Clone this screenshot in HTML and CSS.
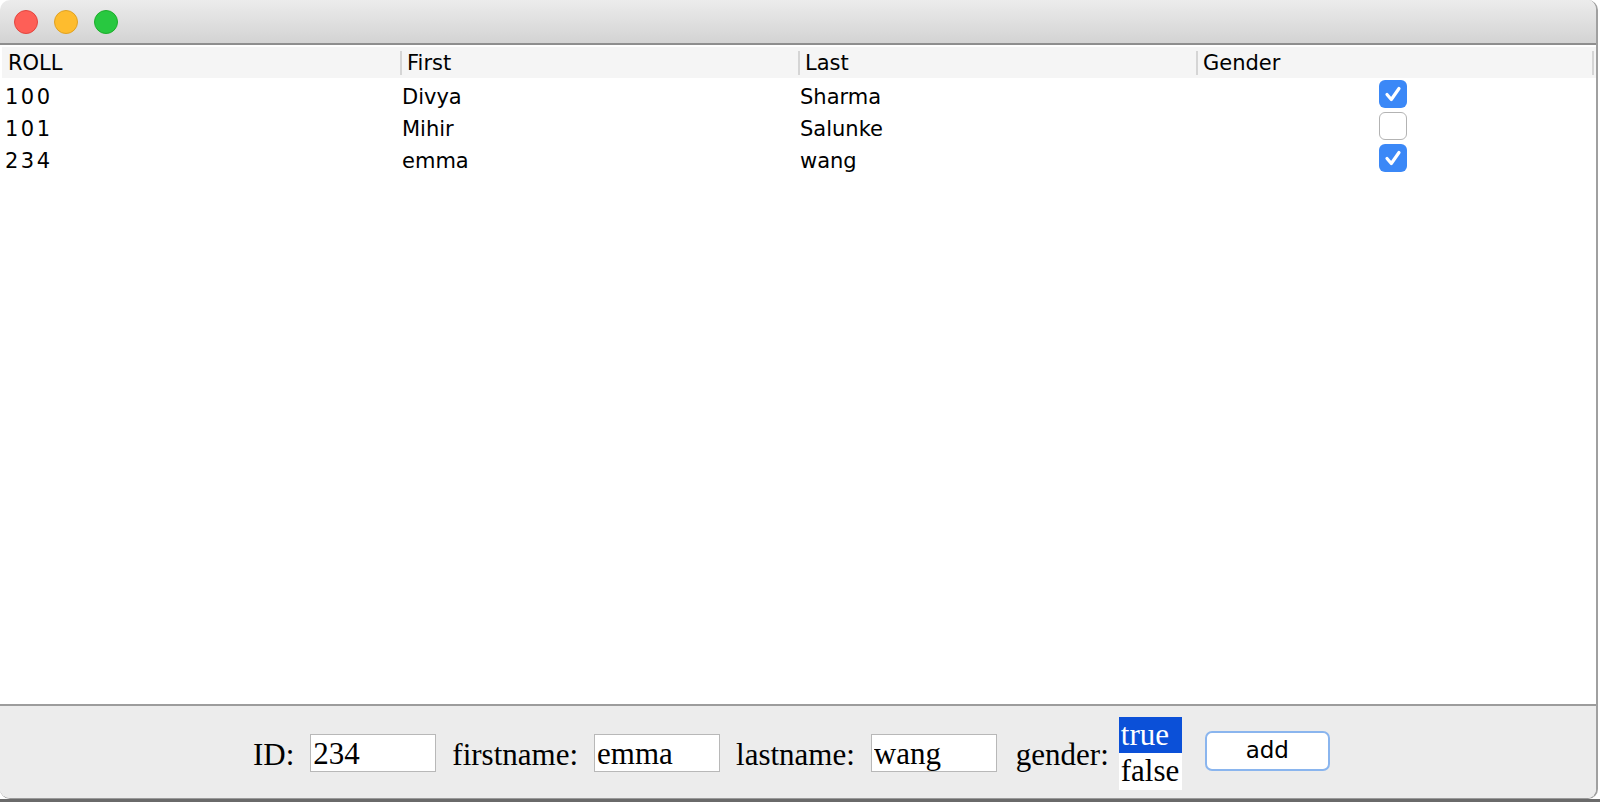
FILE: index.html
```html
<!DOCTYPE html>
<html>
<head>
<meta charset="utf-8">
<title>Students</title>
<link rel="stylesheet" href="styles.css">
</head>
<body>
<div class="window">
  <div class="titlebar">
    <span class="light red"></span>
    <span class="light yellow"></span>
    <span class="light green"></span>
  </div>
  <div class="tablearea">
    <div class="thead">
      <div class="hcell first">ROLL</div>
      <div class="hcell"><i class="sep"></i>First</div>
      <div class="hcell"><i class="sep"></i>Last</div>
      <div class="hcell"><i class="sep"></i>Gender<i class="sep end"></i></div>
    </div>
    <div class="row">
      <div class="cell num">100</div>
      <div class="cell">Divya</div>
      <div class="cell">Sharma</div>
      <div class="cell chk"><span class="box on"><svg viewBox="0 0 28 28" width="28" height="28"><path d="M8 14.5 L12.3 19.5 L20 8.5" fill="none" stroke="#fff" stroke-width="3.2" stroke-linecap="round" stroke-linejoin="round"/></svg></span></div>
    </div>
    <div class="row">
      <div class="cell num">101</div>
      <div class="cell">Mihir</div>
      <div class="cell">Salunke</div>
      <div class="cell chk"><span class="box off"></span></div>
    </div>
    <div class="row">
      <div class="cell num">234</div>
      <div class="cell">emma</div>
      <div class="cell">wang</div>
      <div class="cell chk"><span class="box on"><svg viewBox="0 0 28 28" width="28" height="28"><path d="M8 14.5 L12.3 19.5 L20 8.5" fill="none" stroke="#fff" stroke-width="3.2" stroke-linecap="round" stroke-linejoin="round"/></svg></span></div>
    </div>
  </div>
  <div class="panel">
    <span class="lbl">ID:</span>
    <input class="field" type="text" value="234">
    <span class="lbl">firstname:</span>
    <input class="field" type="text" value="emma">
    <span class="lbl">lastname:</span>
    <input class="field" type="text" value="wang">
    <span class="lbl gender">gender:</span>
    <div class="list">
      <div class="opt sel">true</div>
      <div class="opt">false</div>
    </div>
    <button class="btn" type="button">add</button>
  </div>
</div>
</body>
</html>
```

FILE: styles.css
```css
html, body {
  margin: 0;
  padding: 0;
}
html {
  background: linear-gradient(to bottom, #ffffff 0, #ffffff 799px, #6a6a6a 799px, #6a6a6a 100%);
}
body {
  width: 1600px;
  height: 802px;
  overflow: hidden;
}
.window {
  width: 1598px;
  height: 799px;
  box-sizing: border-box;
  border-right: 2px solid #a0a0a0;
  border-bottom: 1px solid #9a9a9a;
  border-radius: 10px;
  overflow: hidden;
  display: flex;
  flex-direction: column;
  background: #fff;
}
.titlebar {
  height: 43px;
  flex: 0 0 auto;
  border-bottom: 2px solid #8e8e8e;
  background: linear-gradient(to bottom, #ececec, #d3d3d3);
  display: flex;
  align-items: center;
  padding-left: 14px;
  gap: 16px;
}
.light {
  width: 24px;
  height: 24px;
  box-sizing: border-box;
  border-radius: 50%;
  margin-top: 1px;
}
.red { background: #fe5f57; border: 1px solid #e2463f; }
.yellow { background: #febc2e; border: 1px solid #dfa123; }
.green { background: #28c840; border: 1px solid #1dad2b; }

.tablearea {
  flex: 1 1 auto;
  background: #fff;
  padding: 2px 0 0 0;
  font-family: "DejaVu Sans", sans-serif;
  font-size: 21px;
  color: #000;
}
.thead {
  display: grid;
  grid-template-columns: repeat(4, 398px);
  height: 31px;
  margin-left: 2px;
  background: #f5f5f5;
}
.thead .hcell:first-child {
  margin-left: -2px;
}
.hcell {
  display: flex;
  align-items: center;
}
.hcell.first {
  padding-left: 8px;
}
.sep {
  width: 2px;
  height: 24px;
  background: #d5d5d5;
  margin-right: 5px;
  flex: 0 0 auto;
}
.sep.end {
  margin-left: auto;
  margin-right: 0;
}
.row {
  display: grid;
  grid-template-columns: repeat(4, 398px);
  height: 32px;
  align-items: center;
}
.cell {
  padding-left: 4px;
  padding-top: 5px;
  white-space: nowrap;
}
.cell:first-child {
  padding-left: 5px;
}
.num {
  letter-spacing: 2.5px;
}
.cell.chk {
  padding: 0;
  display: flex;
  justify-content: center;
}
.box {
  width: 28px;
  height: 28px;
  box-sizing: border-box;
  border-radius: 6px;
  display: block;
}
.box svg {
  display: block;
}
.box.on {
  background: #3b88f7;
}
.box.off {
  background: #fff;
  border: 1.5px solid #b3b3b3;
}

.panel {
  flex: 0 0 auto;
  height: 92px;
  border-top: 2px solid #9c9c9c;
  background: #ececec;
  display: flex;
  align-items: center;
  justify-content: flex-start;
  gap: 16px;
  padding-left: 253px;
  font-family: "Liberation Serif", "Times New Roman", serif;
  font-size: 31px;
  color: #000;
}
.lbl {
  white-space: nowrap;
  padding-top: 5px;
}
.lbl.gender {
  margin-left: 3px;
}
.field {
  width: 126px;
  height: 38px;
  box-sizing: border-box;
  border: 1px solid #b8b8b8;
  background: #fff;
  padding: 2px 2px 0 2px;
  margin: 2px 0 0 0;
  font-family: "Liberation Serif", "Times New Roman", serif;
  font-size: 31px;
  color: #000;
  outline: none;
  border-radius: 0;
}
.list {
  width: 63px;
  margin-left: -6px;
  margin-top: 2px;
  background: #fff;
}
.opt {
  height: 36.5px;
  line-height: 36px;
  padding-left: 2px;
  white-space: nowrap;
}
.opt.sel {
  background: #0b50d8;
  color: #fff;
}
.btn {
  margin-left: 7px;
  margin-top: -2px;
  width: 125px;
  height: 40px;
  box-sizing: border-box;
  border: 2px solid #8ab5ee;
  border-radius: 7px;
  background: #fff;
  font-family: "DejaVu Sans", sans-serif;
  font-size: 23px;
  color: #000;
  display: flex;
  align-items: center;
  justify-content: center;
  padding: 0 0 2px 0;
}
```
